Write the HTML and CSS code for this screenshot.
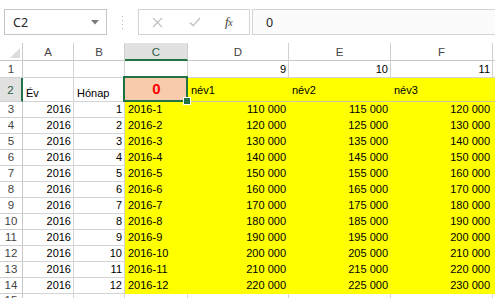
FILE: index.html
```html
<!DOCTYPE html>
<html>
<head>
<meta charset="utf-8">
<link rel="stylesheet" href="styles.css">
</head>
<body>
<div class="app">
  <div class="fbar">
    <div class="namebox">
      <span class="nb-text">C2</span>
      <svg class="nb-arrow" width="8" height="5" viewBox="0 0 8 5"><path d="M0 0H8L4 4.5Z" fill="#7a7a7a"/></svg>
    </div>
    <div class="grip">
      <svg width="3" height="13" viewBox="0 0 3 13"><rect x="1" y="0" width="1" height="1" fill="#b5b5b5"/><rect x="1" y="4" width="1" height="1" fill="#b5b5b5"/><rect x="1" y="8" width="1" height="1" fill="#b5b5b5"/><rect x="1" y="12" width="1" height="1" fill="#b5b5b5"/></svg>
    </div>
    <div class="fbtns">
      <svg class="ic" width="11" height="11" viewBox="0 0 11 11"><path d="M1 1L10 10M10 1L1 10" stroke="#c3c3c3" stroke-width="1.3" fill="none"/></svg>
      <svg class="ic" width="12" height="10" viewBox="0 0 12 10"><path d="M1 5.5L4.2 8.8L11 1" stroke="#c3c3c3" stroke-width="1.4" fill="none"/></svg>
      <span class="fx">f<span class="fxx">x</span></span>
    </div>
    <div class="finput">0</div>
  </div>

  <div class="grid">
    <div class="corner"><svg width="10" height="10" viewBox="0 0 10 10"><path d="M10 0V10H0Z" fill="#dcdcdc"/></svg></div>
    <div class="ch">A</div><div class="ch">B</div><div class="ch ch-sel">C</div><div class="ch">D</div><div class="ch">E</div><div class="ch">F</div><div class="ch ch-last"></div>

    <div class="rh">1</div>
    <div class="c"></div><div class="c"></div><div class="c"></div><div class="c n">9</div><div class="c n">10</div><div class="c n">11</div><div class="c c-last"></div>

    <div class="rh rh-sel">2</div>
    <div class="c">Év</div><div class="c">Hónap</div>
    <div class="c sel"><span class="zero">0</span><span class="handle"></span></div>
    <div class="c y y2">név1</div><div class="c y y2">név2</div><div class="c y y2">név3</div><div class="c y y2 c-last"></div>

    <div class="rh">3</div>
    <div class="c n">2016</div><div class="c n">1</div><div class="c y">2016-1</div><div class="c y n">110 000</div><div class="c y n">115 000</div><div class="c y n">120 000</div><div class="c y c-last"></div>
    <div class="rh">4</div>
    <div class="c n">2016</div><div class="c n">2</div><div class="c y">2016-2</div><div class="c y n">120 000</div><div class="c y n">125 000</div><div class="c y n">130 000</div><div class="c y c-last"></div>
    <div class="rh">5</div>
    <div class="c n">2016</div><div class="c n">3</div><div class="c y">2016-3</div><div class="c y n">130 000</div><div class="c y n">135 000</div><div class="c y n">140 000</div><div class="c y c-last"></div>
    <div class="rh">6</div>
    <div class="c n">2016</div><div class="c n">4</div><div class="c y">2016-4</div><div class="c y n">140 000</div><div class="c y n">145 000</div><div class="c y n">150 000</div><div class="c y c-last"></div>
    <div class="rh">7</div>
    <div class="c n">2016</div><div class="c n">5</div><div class="c y">2016-5</div><div class="c y n">150 000</div><div class="c y n">155 000</div><div class="c y n">160 000</div><div class="c y c-last"></div>
    <div class="rh">8</div>
    <div class="c n">2016</div><div class="c n">6</div><div class="c y">2016-6</div><div class="c y n">160 000</div><div class="c y n">165 000</div><div class="c y n">170 000</div><div class="c y c-last"></div>
    <div class="rh">9</div>
    <div class="c n">2016</div><div class="c n">7</div><div class="c y">2016-7</div><div class="c y n">170 000</div><div class="c y n">175 000</div><div class="c y n">180 000</div><div class="c y c-last"></div>
    <div class="rh">10</div>
    <div class="c n">2016</div><div class="c n">8</div><div class="c y">2016-8</div><div class="c y n">180 000</div><div class="c y n">185 000</div><div class="c y n">190 000</div><div class="c y c-last"></div>
    <div class="rh">11</div>
    <div class="c n">2016</div><div class="c n">9</div><div class="c y">2016-9</div><div class="c y n">190 000</div><div class="c y n">195 000</div><div class="c y n">200 000</div><div class="c y c-last"></div>
    <div class="rh">12</div>
    <div class="c n">2016</div><div class="c n">10</div><div class="c y">2016-10</div><div class="c y n">200 000</div><div class="c y n">205 000</div><div class="c y n">210 000</div><div class="c y c-last"></div>
    <div class="rh">13</div>
    <div class="c n">2016</div><div class="c n">11</div><div class="c y">2016-11</div><div class="c y n">210 000</div><div class="c y n">215 000</div><div class="c y n">220 000</div><div class="c y c-last"></div>
    <div class="rh">14</div>
    <div class="c n">2016</div><div class="c n">12</div><div class="c y">2016-12</div><div class="c y n">220 000</div><div class="c y n">225 000</div><div class="c y n">230 000</div><div class="c y c-last"></div>

    <div class="rh">15</div>
    <div class="c"></div><div class="c"></div><div class="c"></div><div class="c"></div><div class="c"></div><div class="c"></div><div class="c c-last"></div>
  </div>
</div>
</body>
</html>
```

FILE: styles.css
```css
* { box-sizing: border-box; }
html, body { margin: 0; padding: 0; background: #fff; }
body { width: 495px; height: 298px; overflow: hidden; }

.app { width: 495px; height: 298px; overflow: hidden; display: flex; flex-direction: column; }

/* formula bar */
.fbar {
  height: 43px;
  flex: none;
  display: flex;
  align-items: flex-start;
  padding-top: 9px;
  padding-left: 4px;
  font-family: "Noto Sans", "Liberation Sans", sans-serif;
  font-size: 12px;
  color: #262626;
}
.namebox {
  width: 103px;
  height: 26px;
  border: 1px solid #c6c6c6;
  background: #fff;
  display: flex;
  align-items: center;
  padding-left: 8px;
  padding-right: 7px;
}
.nb-text { flex: 1; font-size: 12.5px; }
.nb-arrow { display: block; }
.grip {
  width: 31px;
  height: 26px;
  display: flex;
  align-items: center;
  justify-content: center;
}
.fbtns {
  width: 112px;
  height: 26px;
  border: 1px solid #d4d4d4;
  background: #fff;
  display: flex;
  align-items: center;
  padding-left: 13px;
}
.fbtns .ic { display: block; }
.fbtns .ic:first-child { margin-right: 26px; }
.fbtns .ic:nth-child(2) { margin-right: 24px; }
.fx {
  font-family: "Liberation Serif", serif;
  font-style: italic;
  font-size: 13px;
  color: #3c3c3c;
  letter-spacing: -0.5px;
}
.fxx { font-size: 10px; }
.finput {
  flex: 1;
  height: 26px;
  margin-left: 2px;
  border: 1px solid #d4d4d4;
  border-right: none;
  background: #fbfbfb;
  display: flex;
  align-items: center;
  padding-left: 13px;
  font-size: 12.5px;
}

/* grid */
.grid {
  flex: 1;
  display: grid;
  grid-template-columns: 23px 51px 51px 63px 101px 102px 102px 1fr;
  grid-template-rows: 18px 17px 24px repeat(12, 16px) 1fr;
  font-family: "Liberation Sans", Arial, sans-serif;
  font-size: 11px;
  color: #000;
}
.corner {
  border-right: 1px solid #c9c9c9;
  border-bottom: 1px solid #c9c9c9;
  display: flex;
  align-items: flex-end;
  justify-content: flex-end;
  padding: 0 2px 2px 0;
}
.corner svg { display: block; }
.ch {
  border-right: 1px solid #d0d0d0;
  border-bottom: 1px solid #c9c9c9;
  display: flex;
  align-items: center;
  justify-content: center;
  color: #444;
  font-size: 11.5px;
  padding-top: 1px;
}
.ch-sel {
  background: #e1e1e1;
  border-bottom: 2px solid #217346;
  color: #2f5e45;
  padding-top: 2px;
}
.ch-last { border-right: none; }
.rh {
  border-right: 1px solid #c9c9c9;
  border-bottom: 1px solid #d0d0d0;
  display: flex;
  align-items: flex-end;
  justify-content: center;
  color: #444;
  font-size: 11.5px;
  line-height: 13px;
  padding-bottom: 1px;
}
.rh-sel {
  background: #e1e1e1;
  border-right: 2px solid #217346;
  color: #2f5e45;
  padding-bottom: 4px;
}
.c {
  border-right: 1px solid #d4d4d4;
  border-bottom: 1px solid #d4d4d4;
  display: flex;
  align-items: flex-end;
  line-height: 13px;
  padding: 0 2px 1px 3px;
  white-space: nowrap;
  overflow: hidden;
}
.c.n { justify-content: flex-end; }
.c-last { border-right: none; }
.y { background: #ffff00; border-right-color: #ffff00; border-bottom-color: #ffff00; }
.y2 { border-bottom-color: #c8c8a0; padding-bottom: 4px; }

.sel {
  position: relative;
  background: #f8cbad;
  overflow: visible;
  justify-content: center;
  border-bottom-color: #d4d4d4;
}
.sel::before {
  content: "";
  position: absolute;
  left: -2px; top: -2px; right: -1px; bottom: -1px;
  border: 2px solid #217346;
  pointer-events: none;
}
.zero {
  font-weight: bold;
  color: #ff0000;
  font-size: 15px;
  line-height: 17px;
  padding-bottom: 3px;
}
.handle {
  position: absolute;
  right: -4px;
  bottom: -4px;
  width: 6px;
  height: 6px;
  background: #217346;
  border: 1px solid #fff;
  box-sizing: content-box;
  z-index: 2;
}
```
